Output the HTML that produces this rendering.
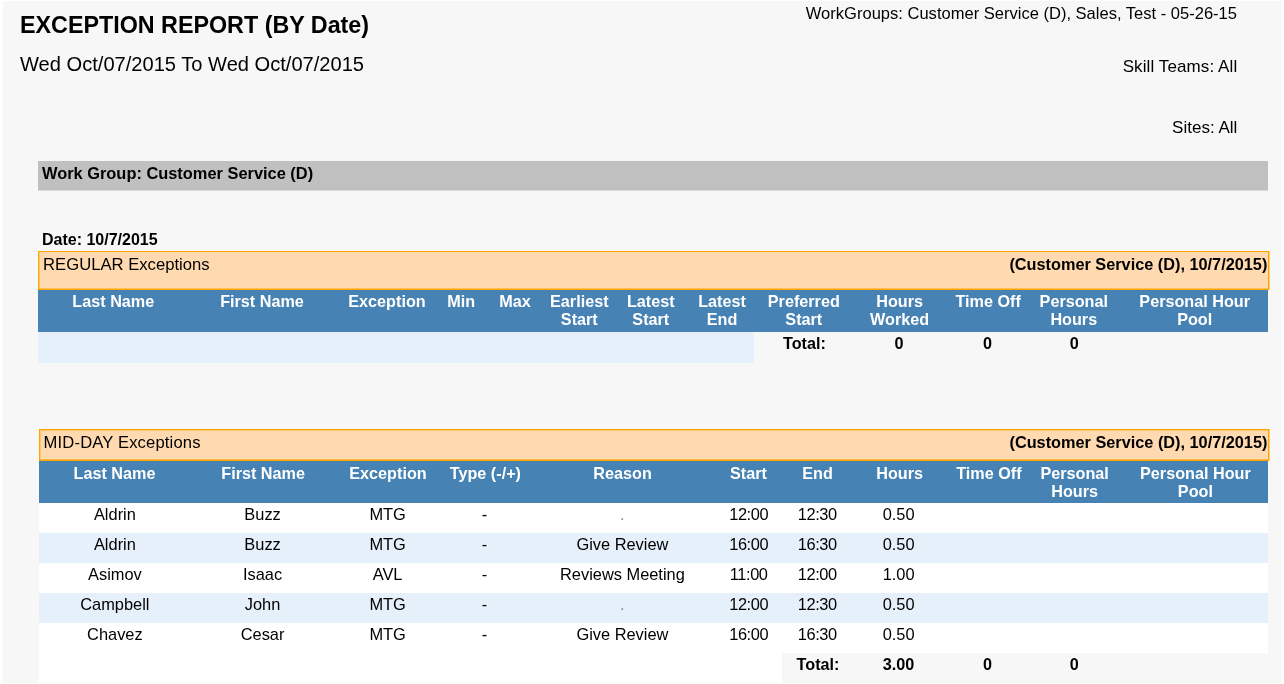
<!DOCTYPE html>
<html><head><meta charset="utf-8"><title>Exception Report</title>
<style>
html,body{margin:0;padding:0;background:#fff;}
body{width:1284px;height:684px;position:relative;overflow:hidden;filter:blur(0.35px);font-family:"Liberation Sans",sans-serif;color:#000;}
.t{position:absolute;white-space:nowrap;}
.b{position:absolute;}
</style></head><body>
<div class="b" style="left:3px;top:1px;width:1279.00px;height:682.00px;background:#f7f7f7;"></div>
<div class="t" style="top:11.00px;font-size:23.3px;line-height:28px;left:20px;font-weight:bold;">EXCEPTION REPORT (BY Date)</div>
<div class="t" style="top:52.00px;font-size:20.1px;line-height:24px;left:20px;">Wed Oct/07/2015 To Wed Oct/07/2015</div>
<div class="t" style="top:3.50px;font-size:16.55px;line-height:20px;right:47px;text-align:right;">WorkGroups: Customer Service (D), Sales, Test - 05-26-15</div>
<div class="t" style="top:56.50px;font-size:17px;line-height:20px;right:46.7px;text-align:right;letter-spacing:0.1px;">Skill Teams: All</div>
<div class="t" style="top:117.50px;font-size:17px;line-height:20px;right:46.7px;text-align:right;">Sites: All</div>
<div class="b" style="left:38px;top:161px;width:1230.00px;height:29.00px;background:#c0c0c0;"></div>
<div class="b" style="left:38px;top:190px;width:1230.00px;height:1.00px;background:#dbdbdb;"></div>
<div class="t" style="top:163.00px;font-size:16.4px;line-height:20px;left:42px;font-weight:bold;">Work Group: Customer Service (D)</div>
<div class="t" style="top:230.00px;font-size:16px;line-height:19px;left:42px;font-weight:bold;">Date: 10/7/2015</div>
<div class="b" style="left:38px;top:251px;width:1231.00px;height:39.00px;background:#ffdab0;box-sizing:border-box;border:1px solid #ffa500;box-shadow:inset 1px 0 0 rgba(255,165,0,.4),inset 0 -1px 0 rgba(255,165,0,.5),1px 0 0 rgba(255,165,0,.5);"></div>
<div class="t" style="top:254.50px;font-size:16.65px;line-height:20px;left:43.1px;">REGULAR Exceptions</div>
<div class="t" style="top:254.00px;font-size:16.3px;line-height:20px;right:16.7px;text-align:right;font-weight:bold;">(Customer Service (D), 10/7/2015)</div>
<div class="b" style="left:38px;top:290px;width:1230.00px;height:42.00px;background:#4682b4;"></div>
<div class="t" style="top:291.50px;font-size:16.2px;line-height:19px;left:13.3px;width:200px;text-align:center;font-weight:bold;color:#fff;">Last Name</div>
<div class="t" style="top:291.50px;font-size:16.2px;line-height:19px;left:162.0px;width:200px;text-align:center;font-weight:bold;color:#fff;">First Name</div>
<div class="t" style="top:291.50px;font-size:16.2px;line-height:19px;left:287.0px;width:200px;text-align:center;font-weight:bold;color:#fff;">Exception</div>
<div class="t" style="top:291.50px;font-size:16.2px;line-height:19px;left:361.2px;width:200px;text-align:center;font-weight:bold;color:#fff;">Min</div>
<div class="t" style="top:291.50px;font-size:16.2px;line-height:19px;left:415.0px;width:200px;text-align:center;font-weight:bold;color:#fff;">Max</div>
<div class="t" style="top:291.50px;font-size:16.2px;line-height:19px;left:479.3px;width:200px;text-align:center;font-weight:bold;color:#fff;">Earliest</div>
<div class="t" style="top:309.50px;font-size:16.2px;line-height:19px;left:479.3px;width:200px;text-align:center;font-weight:bold;color:#fff;">Start</div>
<div class="t" style="top:291.50px;font-size:16.2px;line-height:19px;left:550.8px;width:200px;text-align:center;font-weight:bold;color:#fff;">Latest</div>
<div class="t" style="top:309.50px;font-size:16.2px;line-height:19px;left:550.8px;width:200px;text-align:center;font-weight:bold;color:#fff;">Start</div>
<div class="t" style="top:291.50px;font-size:16.2px;line-height:19px;left:622.0px;width:200px;text-align:center;font-weight:bold;color:#fff;">Latest</div>
<div class="t" style="top:309.50px;font-size:16.2px;line-height:19px;left:622.0px;width:200px;text-align:center;font-weight:bold;color:#fff;">End</div>
<div class="t" style="top:291.50px;font-size:16.2px;line-height:19px;left:703.8px;width:200px;text-align:center;font-weight:bold;color:#fff;">Preferred</div>
<div class="t" style="top:309.50px;font-size:16.2px;line-height:19px;left:703.8px;width:200px;text-align:center;font-weight:bold;color:#fff;">Start</div>
<div class="t" style="top:291.50px;font-size:16.2px;line-height:19px;left:799.6px;width:200px;text-align:center;font-weight:bold;color:#fff;">Hours</div>
<div class="t" style="top:309.50px;font-size:16.2px;line-height:19px;left:799.6px;width:200px;text-align:center;font-weight:bold;color:#fff;">Worked</div>
<div class="t" style="top:291.50px;font-size:16.2px;line-height:19px;left:888.2px;width:200px;text-align:center;font-weight:bold;color:#fff;">Time Off</div>
<div class="t" style="top:291.50px;font-size:16.2px;line-height:19px;left:973.8px;width:200px;text-align:center;font-weight:bold;color:#fff;">Personal</div>
<div class="t" style="top:309.50px;font-size:16.2px;line-height:19px;left:973.8px;width:200px;text-align:center;font-weight:bold;color:#fff;">Hours</div>
<div class="t" style="top:291.50px;font-size:16.2px;line-height:19px;left:1094.7px;width:200px;text-align:center;font-weight:bold;color:#fff;">Personal Hour</div>
<div class="t" style="top:309.50px;font-size:16.2px;line-height:19px;left:1094.7px;width:200px;text-align:center;font-weight:bold;color:#fff;">Pool</div>
<div class="b" style="left:38px;top:332px;width:716.00px;height:31.00px;background:#e6f0fa;"></div>
<div class="t" style="top:333.50px;font-size:16.2px;line-height:19px;left:754.4px;width:100px;text-align:center;font-weight:bold;">Total:</div>
<div class="t" style="top:333.50px;font-size:16.2px;line-height:19px;left:868.9px;width:60px;text-align:center;font-weight:bold;">0</div>
<div class="t" style="top:333.50px;font-size:16.2px;line-height:19px;left:957.6px;width:60px;text-align:center;font-weight:bold;">0</div>
<div class="t" style="top:333.50px;font-size:16.2px;line-height:19px;left:1044.2px;width:60px;text-align:center;font-weight:bold;">0</div>
<div class="b" style="left:39px;top:429px;width:1230.00px;height:32.00px;background:#ffdab0;box-sizing:border-box;border:1px solid #ffa500;box-shadow:inset 1px 1px 0 rgba(255,165,0,.4),inset 0 -1px 0 rgba(255,165,0,.6),1px 0 0 rgba(255,165,0,.5);"></div>
<div class="t" style="top:432.50px;font-size:16.6px;line-height:20px;left:43.6px;letter-spacing:0.15px;">MID-DAY Exceptions</div>
<div class="t" style="top:432.00px;font-size:16.3px;line-height:20px;right:16.6px;text-align:right;font-weight:bold;">(Customer Service (D), 10/7/2015)</div>
<div class="b" style="left:39px;top:461px;width:1229.00px;height:42.00px;background:#4682b4;"></div>
<div class="t" style="top:463.50px;font-size:16.2px;line-height:19px;left:14.5px;width:200px;text-align:center;font-weight:bold;color:#fff;">Last Name</div>
<div class="t" style="top:463.50px;font-size:16.2px;line-height:19px;left:163.1px;width:200px;text-align:center;font-weight:bold;color:#fff;">First Name</div>
<div class="t" style="top:463.50px;font-size:16.2px;line-height:19px;left:288.0px;width:200px;text-align:center;font-weight:bold;color:#fff;">Exception</div>
<div class="t" style="top:463.50px;font-size:16.2px;line-height:19px;left:385.4px;width:200px;text-align:center;font-weight:bold;color:#fff;">Type (-/+)</div>
<div class="t" style="top:463.50px;font-size:16.2px;line-height:19px;left:522.6px;width:200px;text-align:center;font-weight:bold;color:#fff;">Reason</div>
<div class="t" style="top:463.50px;font-size:16.2px;line-height:19px;left:648.5px;width:200px;text-align:center;font-weight:bold;color:#fff;">Start</div>
<div class="t" style="top:463.50px;font-size:16.2px;line-height:19px;left:717.6px;width:200px;text-align:center;font-weight:bold;color:#fff;">End</div>
<div class="t" style="top:463.50px;font-size:16.2px;line-height:19px;left:799.6px;width:200px;text-align:center;font-weight:bold;color:#fff;">Hours</div>
<div class="t" style="top:463.50px;font-size:16.2px;line-height:19px;left:888.9px;width:200px;text-align:center;font-weight:bold;color:#fff;">Time Off</div>
<div class="t" style="top:463.50px;font-size:16.2px;line-height:19px;left:974.6px;width:200px;text-align:center;font-weight:bold;color:#fff;">Personal</div>
<div class="t" style="top:481.50px;font-size:16.2px;line-height:19px;left:974.6px;width:200px;text-align:center;font-weight:bold;color:#fff;">Hours</div>
<div class="t" style="top:463.50px;font-size:16.2px;line-height:19px;left:1095.4px;width:200px;text-align:center;font-weight:bold;color:#fff;">Personal Hour</div>
<div class="t" style="top:481.50px;font-size:16.2px;line-height:19px;left:1095.4px;width:200px;text-align:center;font-weight:bold;color:#fff;">Pool</div>
<div class="b" style="left:39px;top:503px;width:1229.00px;height:30.00px;background:#fff;"></div>
<div class="t" style="top:504.00px;font-size:16.4px;line-height:20px;left:14.9px;width:200px;text-align:center;">Aldrin</div>
<div class="t" style="top:504.00px;font-size:16.4px;line-height:20px;left:162.6px;width:200px;text-align:center;">Buzz</div>
<div class="t" style="top:504.00px;font-size:16.4px;line-height:20px;left:287.6px;width:200px;text-align:center;">MTG</div>
<div class="t" style="top:504.00px;font-size:16.4px;line-height:20px;left:384.5px;width:200px;text-align:center;">-</div>
<div class="t" style="top:504.00px;font-size:16.4px;line-height:20px;left:522.4px;width:200px;text-align:center;color:#8c8c8c;">.</div>
<div class="t" style="top:504.00px;font-size:16.4px;line-height:20px;left:648.7px;width:200px;text-align:center;letter-spacing:-0.4px;">12:00</div>
<div class="t" style="top:504.00px;font-size:16.4px;line-height:20px;left:717.3px;width:200px;text-align:center;letter-spacing:-0.4px;">12:30</div>
<div class="t" style="top:504.00px;font-size:16.4px;line-height:20px;left:798.6px;width:200px;text-align:center;">0.50</div>
<div class="b" style="left:39px;top:533px;width:1229.00px;height:30.00px;background:#e6f0fa;"></div>
<div class="t" style="top:534.00px;font-size:16.4px;line-height:20px;left:14.9px;width:200px;text-align:center;">Aldrin</div>
<div class="t" style="top:534.00px;font-size:16.4px;line-height:20px;left:162.6px;width:200px;text-align:center;">Buzz</div>
<div class="t" style="top:534.00px;font-size:16.4px;line-height:20px;left:287.6px;width:200px;text-align:center;">MTG</div>
<div class="t" style="top:534.00px;font-size:16.4px;line-height:20px;left:384.5px;width:200px;text-align:center;">-</div>
<div class="t" style="top:534.00px;font-size:16.4px;line-height:20px;left:522.4px;width:200px;text-align:center;">Give Review</div>
<div class="t" style="top:534.00px;font-size:16.4px;line-height:20px;left:648.7px;width:200px;text-align:center;letter-spacing:-0.4px;">16:00</div>
<div class="t" style="top:534.00px;font-size:16.4px;line-height:20px;left:717.3px;width:200px;text-align:center;letter-spacing:-0.4px;">16:30</div>
<div class="t" style="top:534.00px;font-size:16.4px;line-height:20px;left:798.6px;width:200px;text-align:center;">0.50</div>
<div class="b" style="left:39px;top:563px;width:1229.00px;height:30.00px;background:#fff;"></div>
<div class="t" style="top:564.00px;font-size:16.4px;line-height:20px;left:14.9px;width:200px;text-align:center;">Asimov</div>
<div class="t" style="top:564.00px;font-size:16.4px;line-height:20px;left:162.6px;width:200px;text-align:center;">Isaac</div>
<div class="t" style="top:564.00px;font-size:16.4px;line-height:20px;left:287.6px;width:200px;text-align:center;">AVL</div>
<div class="t" style="top:564.00px;font-size:16.4px;line-height:20px;left:384.5px;width:200px;text-align:center;">-</div>
<div class="t" style="top:564.00px;font-size:16.4px;line-height:20px;left:522.4px;width:200px;text-align:center;">Reviews Meeting</div>
<div class="t" style="top:564.00px;font-size:16.4px;line-height:20px;left:648.7px;width:200px;text-align:center;letter-spacing:-0.4px;">11:00</div>
<div class="t" style="top:564.00px;font-size:16.4px;line-height:20px;left:717.3px;width:200px;text-align:center;letter-spacing:-0.4px;">12:00</div>
<div class="t" style="top:564.00px;font-size:16.4px;line-height:20px;left:798.6px;width:200px;text-align:center;">1.00</div>
<div class="b" style="left:39px;top:593px;width:1229.00px;height:30.00px;background:#e6f0fa;"></div>
<div class="t" style="top:594.00px;font-size:16.4px;line-height:20px;left:14.9px;width:200px;text-align:center;">Campbell</div>
<div class="t" style="top:594.00px;font-size:16.4px;line-height:20px;left:162.6px;width:200px;text-align:center;">John</div>
<div class="t" style="top:594.00px;font-size:16.4px;line-height:20px;left:287.6px;width:200px;text-align:center;">MTG</div>
<div class="t" style="top:594.00px;font-size:16.4px;line-height:20px;left:384.5px;width:200px;text-align:center;">-</div>
<div class="t" style="top:594.00px;font-size:16.4px;line-height:20px;left:522.4px;width:200px;text-align:center;color:#8c8c8c;">.</div>
<div class="t" style="top:594.00px;font-size:16.4px;line-height:20px;left:648.7px;width:200px;text-align:center;letter-spacing:-0.4px;">12:00</div>
<div class="t" style="top:594.00px;font-size:16.4px;line-height:20px;left:717.3px;width:200px;text-align:center;letter-spacing:-0.4px;">12:30</div>
<div class="t" style="top:594.00px;font-size:16.4px;line-height:20px;left:798.6px;width:200px;text-align:center;">0.50</div>
<div class="b" style="left:39px;top:623px;width:1229.00px;height:30.00px;background:#fff;"></div>
<div class="t" style="top:624.00px;font-size:16.4px;line-height:20px;left:14.9px;width:200px;text-align:center;">Chavez</div>
<div class="t" style="top:624.00px;font-size:16.4px;line-height:20px;left:162.6px;width:200px;text-align:center;">Cesar</div>
<div class="t" style="top:624.00px;font-size:16.4px;line-height:20px;left:287.6px;width:200px;text-align:center;">MTG</div>
<div class="t" style="top:624.00px;font-size:16.4px;line-height:20px;left:384.5px;width:200px;text-align:center;">-</div>
<div class="t" style="top:624.00px;font-size:16.4px;line-height:20px;left:522.4px;width:200px;text-align:center;">Give Review</div>
<div class="t" style="top:624.00px;font-size:16.4px;line-height:20px;left:648.7px;width:200px;text-align:center;letter-spacing:-0.4px;">16:00</div>
<div class="t" style="top:624.00px;font-size:16.4px;line-height:20px;left:717.3px;width:200px;text-align:center;letter-spacing:-0.4px;">16:30</div>
<div class="t" style="top:624.00px;font-size:16.4px;line-height:20px;left:798.6px;width:200px;text-align:center;">0.50</div>
<div class="b" style="left:39px;top:653px;width:743.00px;height:30.00px;background:#fff;"></div>
<div class="t" style="top:654.50px;font-size:16.2px;line-height:19px;left:768.0px;width:100px;text-align:center;font-weight:bold;">Total:</div>
<div class="t" style="top:654.50px;font-size:16.2px;line-height:19px;left:848.6px;width:100px;text-align:center;font-weight:bold;">3.00</div>
<div class="t" style="top:654.50px;font-size:16.2px;line-height:19px;left:957.6px;width:60px;text-align:center;font-weight:bold;">0</div>
<div class="t" style="top:654.50px;font-size:16.2px;line-height:19px;left:1044.2px;width:60px;text-align:center;font-weight:bold;">0</div>
</body></html>
